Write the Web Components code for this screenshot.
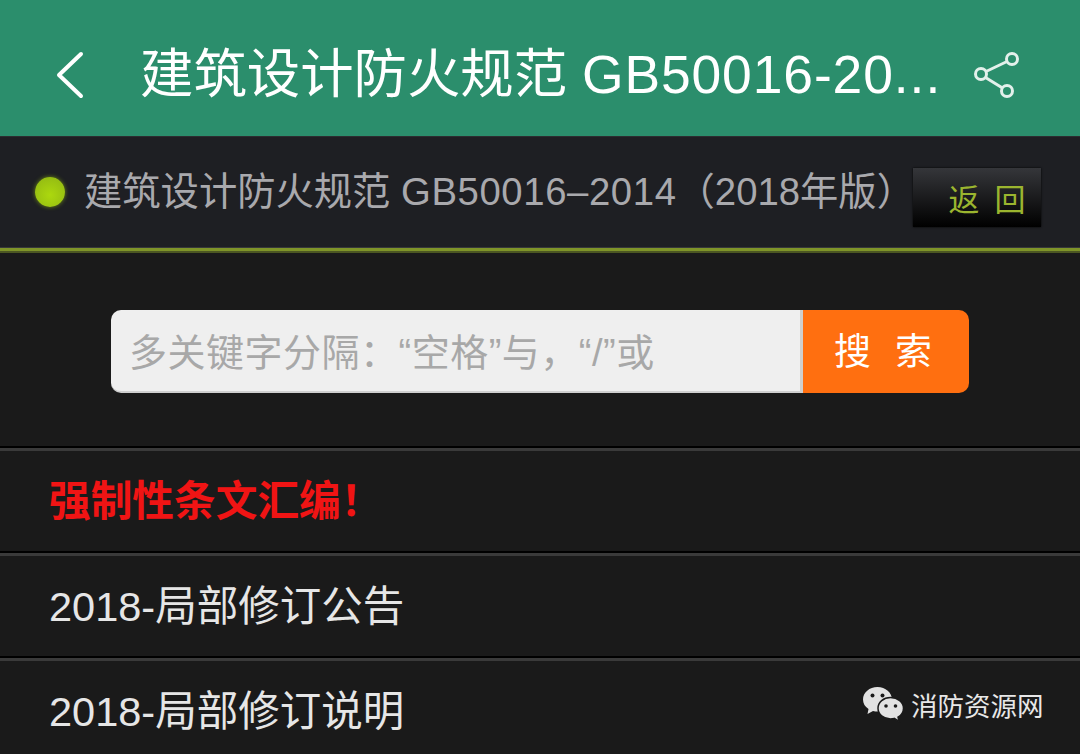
<!DOCTYPE html>
<html lang="zh">
<head>
<meta charset="utf-8">
<title>建筑设计防火规范</title>
<style>
  html, body { margin: 0; height: 100%; background: #1a1a1a; overflow: hidden; }
  body { font-family: "Liberation Sans", "Noto Sans CJK SC", sans-serif; position: relative; }
  .num { letter-spacing: .9px; }
  .dots { letter-spacing: 1px; }
  .num-sm { letter-spacing: .6px; }
</style>
</head>
<body>
<app-header>建筑设计防火规范 <span class="num">GB50016-20</span><span class="dots">...</span></app-header>
<doc-bar>建筑设计防火规范 <span class="num-sm">GB50016–2014</span>（2018年版）</doc-bar>
<search-box placeholder="多关键字分隔：“空格”与，“/”或"></search-box>
<list-row danger>强制性条文汇编！</list-row>
<list-row>2018-局部修订公告</list-row>
<list-row>2018-局部修订说明</list-row>
<wechat-mark>消防资源网</wechat-mark>

<script>
class AppHeader extends HTMLElement {
  constructor () {
    super()
    this.shadow = this.attachShadow({ mode: 'open' })
  }

  connectedCallback () {
    this.shadow.innerHTML = `
      <style>
        :host { display: block; }
        .bar {
          display: flex;
          align-items: center;
          height: 136px;
          padding: 13px 59px 0 56px;
          box-sizing: border-box;
          background: #2b8e6c;
          color: #fff;
        }
        .back { flex: none; width: 30px; height: 48px; margin-right: 54px; }
        .title {
          font-size: 53.400px;
          line-height: 70px;
          white-space: nowrap;
        }
        .share { flex: none; width: 48px; height: 48px; margin-left: auto; }
      </style>
      <div class="bar">
        <svg class="back" viewBox="0 0 30 48" fill="none" stroke="#fff" stroke-width="4" stroke-linecap="round" stroke-linejoin="round">
          <path d="M25 3 3 24 25 45"/>
        </svg>
        <div class="title"><slot></slot></div>
        <svg class="share" viewBox="0 0 48 48" fill="none" stroke="#e3f0eb" stroke-width="3">
          <path d="M13 20.500 34 10.500M12.500 26.500 29.500 37"/>
          <circle cx="8" cy="23" r="5.500"/>
          <circle cx="39" cy="8" r="5.500"/>
          <circle cx="34" cy="40" r="5.500"/>
        </svg>
      </div>
    `
  }
}

class DocBar extends HTMLElement {
  constructor () {
    super()
    this.shadow = this.attachShadow({ mode: 'open' })
  }

  connectedCallback () {
    this.shadow.innerHTML = `
      <style>
        :host { display: block; }
        .bar {
          display: flex;
          align-items: center;
          height: 112px;
          padding: 0 39px 0 35px;
          box-sizing: border-box;
          background: #1e1f23;
          border-top: 1px solid #2c2d30;
          border-bottom: 1px solid #37383a;
        }
        .dot {
          flex: none;
          width: 30px;
          height: 30px;
          border-radius: 50%;
          background: radial-gradient(circle at 50% 60%, #acd80e, #8fb514);
          box-shadow: 0 0 4px #6f8a16;
          margin-right: 19px;
        }
        .name {
          flex: 1;
          min-width: 0;
          margin-bottom: 8px;
          font-size: 38.300px;
          white-space: nowrap;
          color: #a9a9ad;
        }
        .back {
          flex: none;
          width: 128px;
          height: 59px;
          margin-top: 10px;
          padding-left: 20px;
          box-sizing: border-box;
          display: flex;
          align-items: center;
          justify-content: center;
          gap: 15px;
          background: linear-gradient(#35363a, #000);
          color: #9bb52f;
          font-size: 31px;
          box-shadow: 0 0 2px #000;
        }
        .rule {
          height: 5px;
          background: #7f9429;
          border-bottom: 2px solid #4c5722;
          box-sizing: border-box;
        }
      </style>
      <div class="bar">
        <span class="dot"></span>
        <span class="name"><slot></slot></span>
        <span class="back"><span>返</span><span>回</span></span>
      </div>
      <div class="rule"></div>
    `
  }
}

class SearchBox extends HTMLElement {
  constructor () {
    super()
    this.shadow = this.attachShadow({ mode: 'open' })
  }

  connectedCallback () {
    this.shadow.innerHTML = `
      <style>
        :host { display: block; padding: 57px 111px 53px; }
        .box { display: flex; height: 83px; }
        .field {
          flex: 1;
          display: flex;
          align-items: center;
          padding: 0 0 3px 18px;
          box-sizing: border-box;
          background: #efefef;
          border-radius: 10px 0 0 10px;
          border-bottom: 2px solid #cfcfcf;
          border-right: 3px solid #cfcfcf;
          color: #a8a8a8;
          font-size: 38px;
          letter-spacing: .5px;
          white-space: nowrap;
        }
        .go {
          flex: none;
          width: 166px;
          padding: 0 6px 6px 0;
          box-sizing: border-box;
          display: flex;
          align-items: center;
          justify-content: center;
          gap: 24px;
          background: #ff6f10;
          border-radius: 0 10px 10px 0;
          color: #fff;
          font-size: 37px;
        }
      </style>
      <div class="box">
        <div class="field">${this.getAttribute('placeholder')}</div>
        <div class="go"><span>搜</span><span>索</span></div>
      </div>
    `
  }
}

class ListRow extends HTMLElement {
  constructor () {
    super()
    this.shadow = this.attachShadow({ mode: 'open' })
  }

  connectedCallback () {
    this.shadow.innerHTML = `
      <style>
        :host { display: block; }
        .row {
          display: flex;
          align-items: center;
          height: 105px;
          padding: 0 49px 4px;
          box-sizing: border-box;
          border-top: 2px solid #000;
          box-shadow: inset 0 3px 0 #3a3a3a;
          color: #e6e6e6;
          font-size: 41.500px;
          white-space: nowrap;
        }
        :host([danger]) .row { color: #f01414; font-weight: 700; font-size: 41.700px; }
      </style>
      <div class="row"><slot></slot></div>
    `
  }
}

class WechatMark extends HTMLElement {
  constructor () {
    super()
    this.shadow = this.attachShadow({ mode: 'open' })
  }

  connectedCallback () {
    this.shadow.innerHTML = `
      <style>
        :host {
          position: absolute;
          left: 862px;
          top: 686px;
          display: flex;
          align-items: center;
          gap: 7px;
          color: #e8e8e8;
          font-size: 26.500px;
          line-height: 40px;
          white-space: nowrap;
        }
        svg { flex: none; width: 42px; height: 38px; margin-bottom: 4px; }
      </style>
      <svg viewBox="0 0 42 38">
        <path fill="#e2e2e2" d="M15.500 1C7.500 1 1 6.500 1 13.500c0 4 2 7.200 5.500 9.500l-1 5 5.500-3c1.500.4 3 .6 4.500.6 8 0 14.500-5.400 14.500-12.100S23.500 1 15.500 1z"/>
        <path fill="#e2e2e2" stroke="#1a1a1a" stroke-width="1.500" d="M28.500 11.500c-7 0-12.500 4.800-12.500 10.700s5.500 10.700 12.500 10.700c1.300 0 2.600-.2 3.800-.5l4.700 3-1-4.200c3.200-2 5.500-5.200 5.500-9 0-5.900-5.800-10.700-13-10.700z"/>
        <circle cx="10.500" cy="9.500" r="2" fill="#1a1a1a"/>
        <circle cx="20.500" cy="9.500" r="2" fill="#1a1a1a"/>
        <circle cx="24" cy="20" r="1.800" fill="#1a1a1a"/>
        <circle cx="33.500" cy="20" r="1.800" fill="#1a1a1a"/>
      </svg>
      <slot></slot>
    `
  }
}

customElements.define('app-header', AppHeader)
customElements.define('doc-bar', DocBar)
customElements.define('search-box', SearchBox)
customElements.define('list-row', ListRow)
customElements.define('wechat-mark', WechatMark)
</script>
</body>
</html>
